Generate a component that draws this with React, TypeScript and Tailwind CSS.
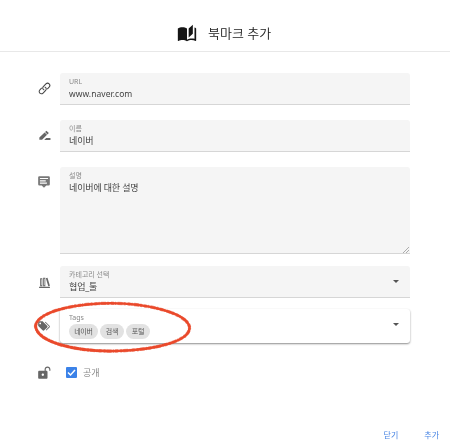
import type { ReactNode } from "react";

const gray = "#666666";

function Icon({ d, size = 13, color = gray }: { d: string; size?: number; color?: string }) {
  return (
    <svg width={size} height={size} viewBox="0 0 24 24" fill={color} className="block shrink-0">
      <path d={d} />
    </svg>
  );
}

function ChainIcon() {
  return (
    <svg width="13" height="13" viewBox="0 0 24 24" fill="none" stroke="#444" strokeWidth="1.900" strokeLinecap="round" className="block">
      <path d="M11 14.500C8.500 13 8 10.500 9.800 8.600L14.600 3.600C16.500 1.700 19 1.900 20.600 3.500C22.200 5.100 22.300 7.600 20.500 9.400L17.500 12.500" />
      <path d="M13 9.500C15.500 11 16 13.500 14.200 15.400L9.400 20.400C7.500 22.300 5 22.100 3.400 20.500C1.800 18.900 1.700 16.400 3.500 14.600L6.500 11.500" />
    </svg>
  );
}

const BOOK =
  "M19 2L14 6.5V17.5L19 13V2M6.5 5C4.55 5 2.45 5.4 1 6.5V21.16C1 21.41 1.25 21.66 1.5 21.66C1.6 21.66 1.65 21.59 1.75 21.59C3.1 20.94 5.05 20.5 6.5 20.5C8.45 20.5 10.55 20.9 12 22C13.35 21.15 15.8 20.5 17.5 20.5C19.15 20.5 20.85 20.81 22.25 21.56C22.35 21.61 22.4 21.59 22.5 21.59C22.75 21.59 23 21.34 23 21.09V6.5C22.4 6.05 21.75 5.75 21 5.5V19C19.9 18.65 18.7 18.5 17.5 18.5C15.8 18.5 13.35 19.15 12 20V6.5C10.55 5.4 8.45 5 6.5 5Z";
const PENCIL =
  "M15.500 3l4.500 4.500-2.500 2.500-4.500-4.500zM12.200 6.300l4.500 4.500L7.500 20H2.500v-4.500zM15 16.500h8v4H11.500z";
const TOOLTIP =
  "M4,2H20A2,2 0 0,1 22,4V16A2,2 0 0,1 20,18H16L12,22L8,18H4A2,2 0 0,1 2,16V4A2,2 0 0,1 4,2M5,5V7H19V5H5M5,9V11H15V9H5M5,13V15H17V13H5Z";
const SHELF =
  "M4 4h4v15H4zM5.500 6v11h1V6zM9.500 3h4v16h-4zM11 5v12h1V5zM14.500 4l3-1 4.500 15-3 1zM2 20h20v2H2z";
const TAGS =
  "M5.500 9A1.500 1.500 0 0 0 7 7.500 1.500 1.500 0 0 0 5.500 6 1.500 1.500 0 0 0 4 7.500 1.500 1.500 0 0 0 5.500 9M17.410 11.580C17.770 11.940 18 12.440 18 13C18 13.550 17.780 14.050 17.410 14.410L12.410 19.410C12.050 19.770 11.550 20 11 20C10.450 20 9.950 19.780 9.580 19.420L2.590 12.420C2.220 12.050 2 11.550 2 11V6C2 4.890 2.890 4 4 4H9C9.550 4 10.050 4.220 10.410 4.580L17.410 11.580M13.540 5.710L14.540 4.710L21.410 11.580C21.780 11.940 22 12.450 22 13C22 13.550 21.780 14.050 21.420 14.410L16.040 19.790L15.040 18.790L20.750 13L13.540 5.710Z";
const UNLOCK =
  "M18 1C15.24 1 13 3.24 13 6V8H4C2.9 8 2 8.89 2 10V20C2 21.11 2.9 22 4 22H16C17.11 22 18 21.11 18 20V10C18 8.9 17.11 8 16 8H15V6C15 4.34 16.34 3 18 3C19.66 3 21 4.34 21 6V8H23V6C23 3.24 20.76 1 18 1M10 13C11.1 13 12 13.89 12 15C12 16.11 11.11 17 10 17C8.9 17 8 16.11 8 15C8 13.9 8.9 13 10 13Z";

function Row({ icon, className, iconClass, children }: { icon: ReactNode; className: string; iconClass: string; children: ReactNode }) {
  return (
    <div className={`flex items-start pl-[37px] pr-10 ${className}`}>
      <div className={`flex w-[23px] shrink-0 ${iconClass}`}>{icon}</div>
      {children}
    </div>
  );
}

function Field({ label, value, className, valueClass = "text-[9px] tracking-[-0.15px]", arrow }: { label: string; value: string; className: string; valueClass?: string; arrow?: boolean }) {
  return (
    <div className={`relative flex-1 rounded-t-[3px] border-b border-[#d6d6d6] bg-[#f5f5f5] pl-[9px] pt-[3px] ${className}`}>
      <div className="text-[7px] leading-[11px] text-[#8a8a8a]">{label}</div>
      <div className={`leading-[13px] text-[#444] ${valueClass}`}>{value}</div>
      {arrow && <Arrow />}
    </div>
  );
}

function Arrow() {
  return (
    <svg className="absolute right-[11px] top-[14px]" width="6" height="3" viewBox="0 0 6 3">
      <path d="M0 0h6L3 3z" fill="#555" />
    </svg>
  );
}

export default function App() {
  return (
    <div className="relative flex h-[446px] w-[450px] flex-col overflow-hidden bg-white font-['Noto_Sans','Noto_Sans_CJK_KR',sans-serif] will-change-transform">
      <header className="flex h-[52px] shrink-0 items-center border-b border-[#e8e8e8] pl-[177px] pt-[15px]">
        <Icon d={BOOK} size={20} color="#151515" />
        <h1 className="ml-[11px] text-[13px] font-[350] leading-5 text-[#222]">북마크 추가</h1>
      </header>

      <Row className="mt-[21px]" iconClass="pl-px pt-[9px]" icon={<ChainIcon />}>
        <Field label="URL" value="www.naver.com" className="h-8" valueClass="text-[8.5px] tracking-[0.05px]" />
      </Row>
      <Row className="mt-[15px]" iconClass="pl-px pt-[9px]" icon={<Icon d={PENCIL} />}>
        <Field label="이름" value="네이버" className="h-8" />
      </Row>
      <Row className="mt-[15px]" iconClass="pt-[8px]" icon={<Icon d={TOOLTIP} size={14} color="#777777" />}>
        <div className="relative flex flex-1">
          <Field label="설명" value="네이버에 대한 설명" className="h-[87px]" />
          <svg className="absolute bottom-[1px] right-px" width="6" height="6" viewBox="0 0 6 6" stroke="#999" strokeWidth="0.8">
            <path d="M0 6L6 0M3 6L6 3" />
          </svg>
        </div>
      </Row>
      <Row className="mt-3" iconClass="pl-px pt-[10px]" icon={<Icon d={SHELF} />}>
        <Field label="카테고리 선택" value="협업_툴" className="h-8" arrow />
      </Row>
      <Row className="mt-[11px]" iconClass="pt-[10px]" icon={<Icon d={TAGS} size={14} />}>
        <div className="relative h-[34px] flex-1 rounded-[3px] bg-white pl-[9px] pt-[3px] shadow-[0_1px_2px_rgba(0,0,0,0.45)]">
          <div className="text-[7px] leading-[11px] text-[#888]">Tags</div>
          <div className="mt-px flex gap-[2px]">
            {["네이버", "검색", "포털"].map((tag, i) => (
              <span key={tag} className={`flex h-[15px] items-center justify-center rounded-full bg-[#e2e2e2] text-[7px] leading-[10px] tracking-[-0.2px] text-[#555] ${i === 0 ? "w-[29px]" : "w-6"}`}>
                {tag}
              </span>
            ))}
          </div>
          <Arrow />
        </div>
      </Row>
      <Row className="mt-[22px]" iconClass="pt-px" icon={<Icon d={UNLOCK} size={14} />}>
        <div className="ml-[6px] flex items-center gap-[6px] pt-px">
          <svg width="11" height="11" viewBox="0 0 11 11">
            <rect width="11" height="11" rx="1" fill="#3b82e8" />
            <path d="M2 5.500L4.500 8L9 3" fill="none" stroke="white" strokeWidth="1.500" />
          </svg>
          <span className="text-[9px] leading-[13px] tracking-[-0.15px] text-[#888]">공개</span>
        </div>
      </Row>

      <footer className="mt-auto flex justify-end gap-[26px] pb-[5px] pr-[11px] text-[8px] leading-[13px] text-[#4a86e4]">
        <button>닫기</button>
        <button>추가</button>
      </footer>

      <svg className="pointer-events-none absolute left-0 top-[290px]" width="210" height="75" viewBox="0 0 210 75" fill="none" stroke="#ea4a2c">
        <path strokeWidth="2.700" d="M35.500 36C37 24 65 15 100 13.500C145 11.500 187 23 189.500 37C191 50 159 60 116 61C75 62 37 52 35.500 36Z" />
        <path strokeWidth="3.300" strokeOpacity="0.6" strokeDasharray="3 1 1 1.500 5 1 2 2" d="M35.500 36C37 24 65 15 100 13.500C145 11.500 187 23 189.500 37C191 50 159 60 116 61C75 62 37 52 35.500 36Z" />
      </svg>
    </div>
  );
}
